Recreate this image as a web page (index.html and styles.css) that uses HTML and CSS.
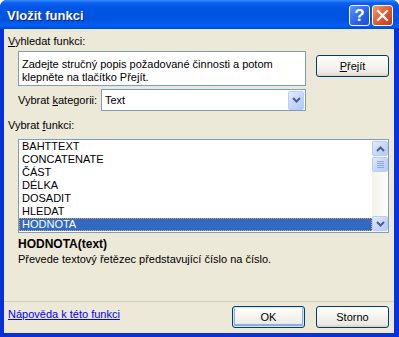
FILE: index.html
```html
<!DOCTYPE html>
<html lang="cs">
<head>
  <meta charset="UTF-8">
  <title>Vložit funkci</title>
  <link rel="stylesheet" href="styles.css">
</head>
<body>
  <div class="window">
    <!-- Title bar -->
    <div class="titlebar">
      <span class="title">Vložit funkci</span>
      <div class="title-buttons">
        <span class="tb-btn help">?</span>
        <span class="tb-btn close">
          <svg width="13" height="13" viewBox="0 0 13 13"><path d="M2 2 L11 11 M11 2 L2 11" stroke="#fff" stroke-width="2.2" stroke-linecap="square"/></svg>
        </span>
      </div>
    </div>

    <!-- Dialog body -->
    <div class="client">
      <div class="label top-label"><u>V</u>yhledat funkci:</div>
      <div class="search-row">
        <div class="search-box">Zadejte stručný popis požadované činnosti a potom<br>klepněte na tlačítko Přejít.</div>
        <button class="btn go"><u>P</u>řejít</button>
      </div>

      <div class="category-row">
        <span class="label cat-label">Vybrat <u>k</u>ategorii:</span>
        <div class="select">
          <span class="select-text">Text</span>
          <span class="drop-btn">
            <svg width="9" height="6" viewBox="0 0 9 6"><path d="M1 1 L4.5 4.5 L8 1" fill="none" stroke="#4d6185" stroke-width="2"/></svg>
          </span>
        </div>
      </div>

      <div class="label func-label">Vybrat <u>f</u>unkci:</div>
      <div class="listbox">
        <ul class="items">
          <li>BAHTTEXT</li>
          <li>CONCATENATE</li>
          <li>ČÁST</li>
          <li>DÉLKA</li>
          <li>DOSADIT</li>
          <li>HLEDAT</li>
          <li class="selected">HODNOTA</li>
        </ul>
        <div class="scrollbar">
          <span class="sb-btn">
            <svg width="9" height="6" viewBox="0 0 9 6"><path d="M1 5 L4.5 1.5 L8 5" fill="none" stroke="#4d6185" stroke-width="2"/></svg>
          </span>
          <span class="sb-thumb"><i></i><i></i><i></i><i></i></span>
          <span class="sb-track"></span>
          <span class="sb-btn">
            <svg width="9" height="6" viewBox="0 0 9 6"><path d="M1 1 L4.5 4.5 L8 1" fill="none" stroke="#4d6185" stroke-width="2"/></svg>
          </span>
        </div>
      </div>

      <div class="func-sig">HODNOTA(text)</div>
      <div class="func-desc">Převede textový řetězec představující číslo na číslo.</div>

      <div class="footer">
        <a href="#" class="help-link">Nápověda k této funkci</a>
        <div class="footer-buttons">
          <button class="btn default">OK</button>
          <button class="btn">Storno</button>
        </div>
      </div>
    </div>
  </div>
</body>
</html>
```

FILE: styles.css
```css
/* Base */
* {
  margin: 0;
  padding: 0;
  box-sizing: border-box;
}

body {
  font-family: "Liberation Sans", Arial, sans-serif;
  font-size: 11px;
  line-height: 13px;
  color: #000;
  background: #fff;
}

u {
  text-decoration: underline;
}

/* Window frame */
.window {
  width: 399px;
  height: 337px;
  display: flex;
  flex-direction: column;
  background: #0831d9;
  border-radius: 7px 7px 0 0;
  overflow: hidden;
}

.titlebar {
  height: 29px;
  flex: none;
  display: flex;
  align-items: center;
  justify-content: space-between;
  padding: 0 6px 0 7px;
  background: linear-gradient(#3a8cff 0, #0a5ff2 3px, #0055e5 8px, #0053e1 20px, #0061f5 26px, #0046d0 29px);
}

.title {
  color: #fff;
  font-weight: bold;
  font-size: 13px;
  padding-top: 1px;
  text-shadow: 1px 1px 0 #0a1e7c;
}

.title-buttons {
  display: flex;
  gap: 2px;
  margin-top: 1px;
}

.tb-btn {
  width: 21px;
  height: 21px;
  border: 1px solid #fff;
  border-radius: 3px;
  display: flex;
  align-items: center;
  justify-content: center;
  color: #fff;
}

.tb-btn.help {
  background: linear-gradient(135deg, #5a93ff, #2762e6 60%, #1a4ed3);
  font-weight: bold;
  font-size: 17px;
}

.tb-btn.close {
  background: linear-gradient(135deg, #f2996f, #e2552b 55%, #c9381a);
}

/* Client area */
.client {
  flex: 1;
  display: flex;
  flex-direction: column;
  margin: 0 5px 4px 4px;
  background: #ece9d8;
}

.label {
  white-space: nowrap;
}

.top-label {
  margin: 6px 0 0 4px;
}

.search-row {
  display: flex;
  align-items: flex-start;
  margin: 3px 0 0 14px;
}

.search-box {
  width: 288px;
  height: 35px;
  border: 1px solid #7f9db9;
  background: #fff;
  padding: 6px 3px 0;
}

/* Push buttons */
.btn {
  width: 73px;
  height: 22px;
  border: 1px solid #003c74;
  border-radius: 3px;
  background: linear-gradient(#fff, #f4f3ee 50%, #ece9e2 85%, #d8d2c6);
  font-family: inherit;
  font-size: 11px;
  color: #000;
}

.btn.go {
  margin: 4px 0 0 10px;
}

.btn.default {
  box-shadow: inset 0 0 0 1px #cee7ff, inset 0 -1px 0 2px #89ade4;
}

/* Category */
.category-row {
  display: flex;
  align-items: center;
  margin: 3px 0 0 14px;
}

.cat-label {
  width: 83px;
}

.select {
  width: 205px;
  height: 22px;
  border: 1px solid #7f9db9;
  background: #fff;
  display: flex;
  align-items: center;
  justify-content: space-between;
  padding: 0 1px 0 3px;
}

.drop-btn {
  width: 16px;
  height: 19px;
  border: 1px solid #b9cdf5;
  border-radius: 2px;
  background: linear-gradient(135deg, #e6eeff, #c2d4fb 60%, #b3c8f6);
  display: flex;
  align-items: center;
  justify-content: center;
}

.func-label {
  margin: 8px 0 0 4px;
}

/* Function list */
.listbox {
  margin: 7px 0 0 14px;
  width: 371px;
  height: 94px;
  border: 1px solid #7f9db9;
  background: #fff;
  display: flex;
}

.items {
  flex: 1;
  list-style: none;
}

.items li {
  height: 13px;
  padding-left: 3px;
  white-space: nowrap;
}

.items li.selected {
  background: #316ac5;
  color: #fff;
  border: 1px dotted #e8a33a;
  line-height: 11px;
  padding-left: 2px;
}

.scrollbar {
  width: 16px;
  display: flex;
  flex-direction: column;
  background: linear-gradient(90deg, #f3f1ec, #fefefb);
  padding: 1px 0;
  gap: 1px;
}

.sb-btn,
.sb-thumb {
  height: 15px;
  border: 1px solid #b9cdf5;
  border-radius: 2px;
  background: linear-gradient(135deg, #e1eaff, #c4d5fb 60%, #b4c9f6);
  display: flex;
  align-items: center;
  justify-content: center;
}

.sb-thumb {
  flex-direction: column;
  gap: 1px;
}

.sb-thumb i {
  display: block;
  width: 7px;
  height: 1px;
  background: #8da8e8;
}

.sb-track {
  flex: 1;
}

/* Description */
.func-sig {
  margin: 5px 0 0 14px;
  font-weight: bold;
  font-size: 12px;
}

.func-desc {
  margin: 2px 0 0 14px;
}

/* Footer */
.footer {
  margin-top: auto;
  height: 32px;
  border-top: 1px solid #d2cfbf;
  display: flex;
  justify-content: space-between;
  align-items: flex-start;
  padding: 4px 5px 0 4px;
}

.help-link {
  color: #0000ff;
  text-decoration: underline;
  margin-top: 2px;
}

.footer-buttons {
  display: flex;
  gap: 11px;
}
```
